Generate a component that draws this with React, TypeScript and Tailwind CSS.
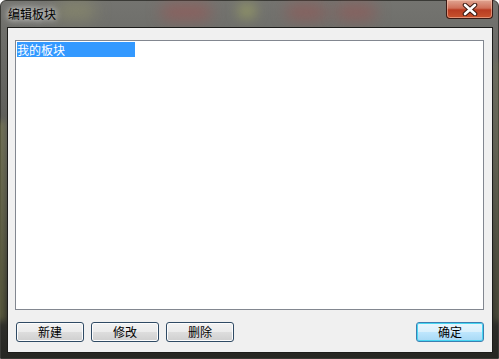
import React from 'react';

const font = { fontFamily: '"Noto Sans CJK SC", "Noto Sans", sans-serif' };

function WinButton({ label, isDefault = false }: { label: string; isDefault?: boolean }) {
    return (
        <button
            className={`block h-[20px] w-[68px] rounded-[3px] border text-[12px] leading-none text-black ${
                isDefault
                    ? 'border-[#3c7fb1] bg-[linear-gradient(#eaf6fd_0%,#d9f0fc_50%,#bee6fd_51%,#a7d9f5_100%)] shadow-[inset_0_0_0_1px_#48d6f2]'
                    : 'border-[#2f4a64] bg-[linear-gradient(#f2f2f2_0%,#ebebeb_50%,#dddddd_51%,#cfcfcf_100%)] shadow-[inset_0_0_0_1px_#fcfcfc]'
            }`}
        >
            {label}
        </button>
    );
}

export default function App() {
    return (
        <div className="w-[499px] h-[359px] overflow-hidden" style={font}>
            <div className="relative flex h-full w-full flex-col rounded-t-[6px] border border-[#3a3a36] bg-[linear-gradient(180deg,#747470_0%,#5a5a56_40%,#3a3a36_75%,#262622_100%)] pb-[6px] pl-[6px] pr-[5px]">
                {/* blurred backdrop spots */}
                <div className="pointer-events-none absolute left-[55px] top-[2px] h-[16px] w-[40px] rounded-full bg-[#a6a66a]/40 blur-[8px]" />
                <div className="pointer-events-none absolute left-[160px] top-[4px] h-[14px] w-[50px] rounded-full bg-[#b04848]/50 blur-[8px]" />
                <div className="pointer-events-none absolute left-[285px] top-[4px] h-[14px] w-[40px] rounded-full bg-[#a84848]/50 blur-[8px]" />
                <div className="pointer-events-none absolute left-[335px] top-[4px] h-[14px] w-[40px] rounded-full bg-[#a84848]/50 blur-[8px]" />
                <div className="pointer-events-none absolute left-[236px] top-[2px] h-[16px] w-[20px] rounded-full bg-[#a8b060]/50 blur-[6px]" />
                <div className="pointer-events-none absolute left-[-4px] top-[120px] h-[200px] w-[8px] bg-[#8a8a50]/50 blur-[3px]" />
                <div className="pointer-events-none absolute right-[-4px] top-[60px] h-[260px] w-[8px] bg-[#7a7a50]/40 blur-[3px]" />

                {/* Title bar */}
                <div className="relative flex h-[26px] shrink-0 items-start justify-between">
                    <span className="mt-[6px] pl-[1px] text-[12px] leading-[14px] text-black [text-shadow:0_0_6px_rgba(255,255,255,0.9),0_0_10px_rgba(255,255,255,0.6)]">
                        编辑板块
                    </span>
                    <button className="-mt-[1px] flex h-[19px] w-[47px] items-center justify-center rounded-b-[4px] border border-t-0 border-[#3b1a14] bg-[linear-gradient(#e0a592_0%,#cf7059_45%,#b83c22_55%,#c8532e_100%)] shadow-[inset_0_0_0_1px_rgba(255,210,190,0.5)]">
                        <svg width="16" height="13" viewBox="0 0 16 13">
                            <path
                                d="M3 2 L13 11 M13 2 L3 11"
                                stroke="#3a1810"
                                strokeWidth="4.6"
                                fill="none"
                                strokeLinecap="round"
                            />
                            <path
                                d="M3 2 L13 11 M13 2 L3 11"
                                stroke="#ffffff"
                                strokeWidth="2.6"
                                fill="none"
                                strokeLinecap="round"
                            />
                        </svg>
                    </button>
                </div>

                {/* Client area */}
                <div className="relative flex flex-1 flex-col border border-[#1c1c1a] bg-[#f0f0f0] pb-[10px] pl-[7px] pr-[8px] pt-[12px]">
                    <div className="h-[270px] shrink-0 border border-[#828790] bg-white p-[1px]">
                        <div className="h-[15px] w-[118px] bg-[#3399ff] text-[12px] leading-[15px] text-white">
                            我的板块
                        </div>
                    </div>

                    <div className="mt-[12px] flex items-start">
                        <div className="flex gap-[7px] pl-[1px]">
                            <WinButton label="新建" />
                            <WinButton label="修改" />
                            <WinButton label="删除" />
                        </div>
                        <div className="ml-auto flex">
                            <WinButton label="确定" isDefault />
                        </div>
                    </div>
                </div>
            </div>
        </div>
    );
}
